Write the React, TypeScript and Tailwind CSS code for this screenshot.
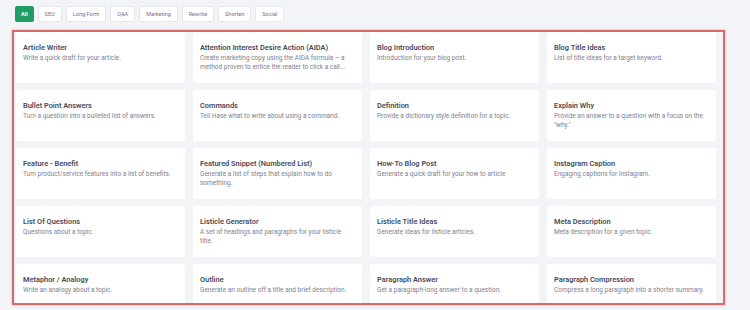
const tabs = [
  { label: 'All', active: true },
  { label: 'SEO' },
  { label: 'Long-Form' },
  { label: 'Q&A' },
  { label: 'Marketing' },
  { label: 'Rewrite' },
  { label: 'Shorten' },
  { label: 'Social' },
];

const templates = [
  { title: 'Article Writer', desc: 'Write a quick draft for your article.' },
  {
    title: 'Attention Interest Desire Action (AIDA)',
    desc: 'Create marketing copy using the AIDA formula – a method proven to entice the reader to click a call...',
  },
  { title: 'Blog Introduction', desc: 'Introduction for your blog post.' },
  { title: 'Blog Title Ideas', desc: 'List of title ideas for a target keyword.' },
  { title: 'Bullet Point Answers', desc: 'Turn a question into a bulleted list of answers.' },
  { title: 'Commands', desc: 'Tell Hase what to write about using a command.' },
  { title: 'Definition', desc: 'Provide a dictionary style definition for a topic.' },
  { title: 'Explain Why', desc: 'Provide an answer to a question with a focus on the "why."' },
  { title: 'Feature - Benefit', desc: 'Turn product/service features into a list of benefits.' },
  { title: 'Featured Snippet (Numbered List)', desc: 'Generate a list of steps that explain how to do something.' },
  { title: 'How-To Blog Post', desc: 'Generate a quick draft for your how to article' },
  { title: 'Instagram Caption', desc: 'Engaging captions for Instagram.' },
  { title: 'List Of Questions', desc: 'Questions about a topic.' },
  { title: 'Listicle Generator', desc: 'A set of headings and paragraphs for your listicle title.' },
  { title: 'Listicle Title Ideas', desc: 'Generate ideas for listicle articles.' },
  { title: 'Meta Description', desc: 'Meta description for a given topic.' },
  { title: 'Metaphor / Analogy', desc: 'Write an analogy about a topic.' },
  { title: 'Outline', desc: 'Generate an outline off a title and brief description.' },
  { title: 'Paragraph Answer', desc: 'Get a paragraph-long answer to a question.' },
  { title: 'Paragraph Compression', desc: 'Compress a long paragraph into a shorter summary.' },
];

export default function App() {
  return (
    <div className="w-[750px] h-[310px] overflow-hidden bg-[#f3f4f8] font-['Roboto',sans-serif]">
      <div className="flex gap-[4px] pl-[15px] pt-[6px]">
        {tabs.map((t) =>
          t.active ? (
            <button
              key={t.label}
              className="h-[16px] px-[6px] rounded-[2px] bg-[#1f9d63] text-white text-[5.5px] font-bold"
            >
              {t.label}
            </button>
          ) : (
            <button
              key={t.label}
              className="h-[16px] px-[6px] rounded-[2px] bg-white border border-[#e6e7ec] text-[#70747f] text-[5.5px]"
            >
              {t.label}
            </button>
          )
        )}
      </div>

      <div className="mt-[8px] ml-[12px] w-[713px] h-[275px] border-2 border-[#d96a6a] overflow-hidden pl-[2px] shadow-[0_0_2px_rgba(200,80,80,0.5)]">
        <div className="grid grid-cols-[repeat(4,169px)] auto-rows-[51px] gap-x-[8px] gap-y-[7px]">
          {templates.map((c) => (
            <div key={c.title} className="bg-white rounded-[2px] px-[7px] pt-[11px]">
              <div className="text-[7.4px] leading-[9px] font-semibold text-[#474c58]">{c.title}</div>
              <div className="mt-[2px] text-[6.5px] leading-[9px] text-[#7e828d] pr-[3px]">{c.desc}</div>
            </div>
          ))}
        </div>
      </div>
    </div>
  );
}
